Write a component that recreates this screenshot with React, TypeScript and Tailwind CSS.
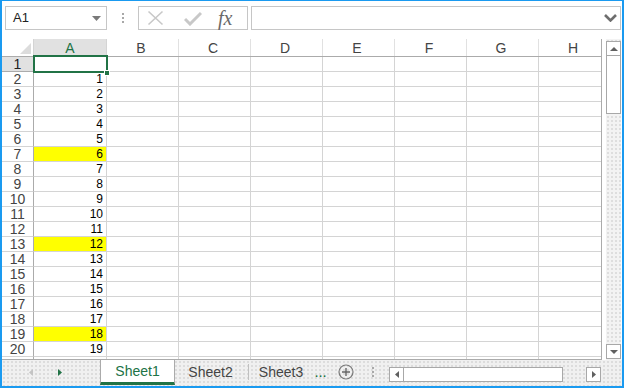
const cols = ['A', 'B', 'C', 'D', 'E', 'F', 'G', 'H'];
const colW = [73, 72, 72, 72, 72, 72, 72, 72];
const yellow = [7, 13, 19];
const rows = Array.from({ length: 21 }, (_, i) => i + 1);

const Dots = () => (
  <div className="flex flex-col gap-[2px]">
    <span className="w-[2px] h-[2px] bg-[#a8a8a8]" />
    <span className="w-[2px] h-[2px] bg-[#a8a8a8]" />
    <span className="w-[2px] h-[2px] bg-[#a8a8a8]" />
  </div>
);

const FormulaBar = () => (
  <div className="h-[38px] shrink-0 flex items-start pt-[5px] pl-[3px]">
    {/* name box */}
    <div className="w-[102px] h-[24px] border border-[#c6c6c6] flex items-center justify-between pl-[7px] pr-[5px]">
      <span className="text-[13px] text-[#222]">A1</span>
      <svg width="9" height="5" viewBox="0 0 9 5">
        <path d="M0 0h9L4.5 5z" fill="#7a7a7a" />
      </svg>
    </div>
    <div className="w-[31px] h-[24px] flex items-center justify-center">
      <Dots />
    </div>
    <div className="w-[110px] h-[24px] border border-[#c6c6c6] flex items-center">
      <svg className="ml-[8px]" width="17" height="16" viewBox="0 0 17 16">
        <path d="M1.5 1.5l14 13M15.5 1.5l-14 13" stroke="#c8c8c8" strokeWidth="1.6" />
      </svg>
      <svg className="ml-[20px]" width="18" height="15" viewBox="0 0 18 15">
        <path d="M1 8l5 5L17 2" stroke="#c8c8c8" strokeWidth="3" fill="none" />
      </svg>
      <span className="ml-[16px] font-['Liberation_Serif',serif] italic text-[20px] text-[#6a6a6a] leading-none">
        fx
      </span>
    </div>
    <div className="ml-[3px] w-[370px] h-[24px] border border-[#c6c6c6] flex items-center justify-end pr-[3px]">
      <svg width="13" height="8" viewBox="0 0 13 8">
        <path d="M1 1l5.5 5.5L12 1" stroke="#6e6e6e" strokeWidth="2.6" fill="none" />
      </svg>
    </div>
  </div>
);

const HeaderRow = () => (
  <div className="flex h-[18px] shrink-0 border-b border-[#ababab]">
    <div className="w-[32px] shrink-0 border-r border-[#d4d4d4] flex items-end justify-end pr-[2px] pb-[2px]">
      <svg width="11" height="11" viewBox="0 0 11 11">
        <path d="M11 0v11H0z" fill="#dcdcdc" />
      </svg>
    </div>
    {cols.map((c, i) => (
      <div
        key={c}
        style={{ width: colW[i] }}
        className={
          c === 'A'
            ? 'shrink-0 border-r border-[#d4d4d4] bg-[#e1e1e1] text-[#217346] flex items-center justify-center text-[14px] leading-none'
            : 'shrink-0 border-r border-[#e1e1e1] text-[#444] flex items-center justify-center text-[14px] leading-none pr-[3px]'
        }
      >
        {c}
      </div>
    ))}
  </div>
);

const GridRow = ({ r }: { r: number }) => (
  <div className="flex h-[15px] shrink-0">
    <div
      className={
        r === 1
          ? 'w-[32px] shrink-0 border-r border-b border-[#ababab] bg-[#e1e1e1] text-[#222] text-[14px] leading-none flex items-center justify-center'
          : 'w-[32px] shrink-0 border-r border-b border-[#d4d4d4] border-r-[#ababab] text-[#444] text-[14px] leading-none flex items-center justify-center'
      }
    >
      {r <= 20 ? r : ''}
    </div>
    {cols.map((c, i) => (
      <div
        key={c}
        style={{ width: colW[i] }}
        className={
          c === 'A' && yellow.includes(r)
            ? 'shrink-0 border-r border-b border-[#d4d4d4] bg-[#ffff00] flex items-center justify-end pr-[3px]'
            : 'shrink-0 border-r border-b border-[#d4d4d4] flex items-center justify-end pr-[3px]'
        }
      >
        {c === 'A' && r > 1 && r <= 20 && (
          <span className="font-['Liberation_Sans_Narrow','Liberation_Sans',sans-serif] text-[12px] leading-none text-black">
            {r - 1}
          </span>
        )}
      </div>
    ))}
  </div>
);

const VScroll = () => (
  <div className="ml-[4px] w-[15px] flex flex-col pt-[2px] bg-[radial-gradient(#dedede_1px,transparent_1px)] bg-[length:4px_4px] bg-[#f3f3f3]">
    <div className="h-[15px] border border-[#a8a8a8] bg-white flex items-center justify-center">
      <svg width="8" height="4" viewBox="0 0 8 4">
        <path d="M0 4h8L4 0z" fill="#606060" />
      </svg>
    </div>
    <div className="h-[58px] border border-t-0 border-[#a8a8a8] bg-white" />
    <div className="flex-1" />
    <div className="h-[15px] mb-[1px] border border-[#a8a8a8] bg-white flex items-center justify-center">
      <svg width="8" height="4" viewBox="0 0 8 4">
        <path d="M0 0h8L4 4z" fill="#606060" />
      </svg>
    </div>
  </div>
);

const TabBar = () => (
  <div className="h-[26px] shrink-0 flex items-start bg-[#f0f0f0] bg-[radial-gradient(#dcdcdc_1px,transparent_1px)] bg-[length:4px_4px] text-[14px]">
    <div className="w-[98px] h-[24px] flex items-center">
      <svg className="ml-[27px]" width="4" height="7" viewBox="0 0 4 7">
        <path d="M4 0v7L0 3.5z" fill="#c4c4c4" />
      </svg>
      <svg className="ml-[25px]" width="4" height="7" viewBox="0 0 4 7">
        <path d="M0 0v7l4-3.5z" fill="#217346" />
      </svg>
    </div>
    <div className="w-[75px] h-[25px] bg-white border-x border-[#ababab] border-b-[3px] border-b-[#217346] flex items-center justify-center text-[#217346]">
      Sheet1
    </div>
    <div className="w-[73px] h-[24px] flex items-center justify-center text-[#444] pr-[2px]">Sheet2</div>
    <div className="w-px h-[16px] mt-[4px] bg-[#c0c0c0]" />
    <div className="w-[66px] h-[24px] flex items-center justify-center text-[#444] pr-[2px]">Sheet3</div>
    <div className="h-[24px] flex items-center">
      <span className="text-[#217346] font-bold text-[11px] tracking-[1px] mt-[3px]">...</span>
      <svg className="ml-[11px]" width="16" height="16" viewBox="0 0 16 16">
        <circle cx="8" cy="8" r="7" stroke="#777" strokeWidth="1.2" fill="none" />
        <path d="M8 4v8M4 8h8" stroke="#666" strokeWidth="1.4" />
      </svg>
      <div className="ml-[18px]">
        <Dots />
      </div>
    </div>
    <div className="ml-[15px] mt-[7px] w-[212px] h-[15px] flex">
      <div className="w-[15px] h-[15px] border border-[#a8a8a8] bg-white flex items-center justify-center">
        <svg width="4" height="7" viewBox="0 0 4 7">
          <path d="M4 0v7L0 3.5z" fill="#606060" />
        </svg>
      </div>
      <div className="w-[159px] h-[15px] border border-l-0 border-[#a8a8a8] bg-white" />
      <div className="flex-1" />
      <div className="w-[15px] h-[15px] border border-[#a8a8a8] bg-white flex items-center justify-center">
        <svg width="4" height="7" viewBox="0 0 4 7">
          <path d="M0 0v7l4-3.5z" fill="#606060" />
        </svg>
      </div>
    </div>
  </div>
);

export default function App() {
  return (
    <div className="w-[624px] h-[388px] border-t border-x-2 border-b-2 border-[#1a9af0] bg-white flex flex-col overflow-hidden font-['Liberation_Sans',sans-serif]">
      <FormulaBar />
      <div className="h-[321px] shrink-0 flex">
        <div className="relative w-[600px] h-full overflow-hidden flex flex-col border-r border-b border-[#ababab]">
          <HeaderRow />
          {rows.map((r) => (
            <GridRow key={r} r={r} />
          ))}
          {/* selection on A1 */}
          <div className="absolute left-[31px] top-[16px] w-[75px] h-[18px] border-2 border-[#217346]" />
          <div className="absolute left-[102px] top-[31px] w-[6px] h-[6px] bg-[#217346] border border-white" />
        </div>
        <VScroll />
      </div>
      <TabBar />
    </div>
  );
}
